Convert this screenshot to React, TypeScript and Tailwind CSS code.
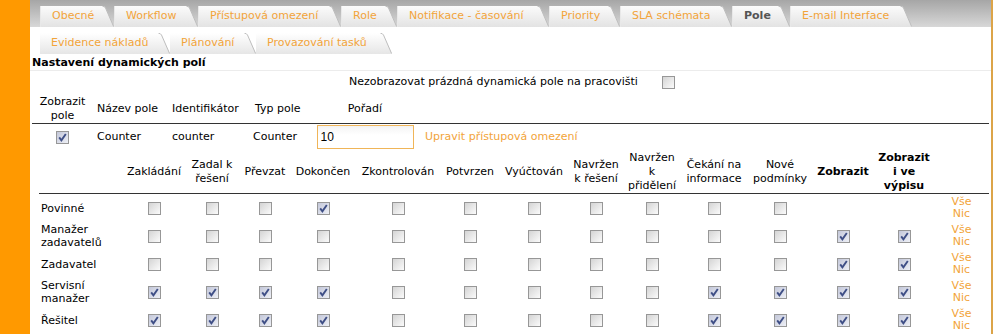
import React from "react";

const ORANGE = "text-[#f2a43a]";

function Check({ on }: { on: boolean }) {
  return (
    <span
      className={
        "inline-flex items-center justify-center w-[13px] h-[13px] border border-[#979797] " +
        (on
          ? "bg-[linear-gradient(135deg,#c3c7d9,#eef0f6)]"
          : "bg-[linear-gradient(135deg,#d4d4d4,#fbfbfb)]")
      }
    >
      {on && (
        <svg width="11" height="11" viewBox="0 0 11 11">
          <path d="M2.2 5.4 L4.4 8.3 L8.8 2" fill="none" stroke="#3f4f86" strokeWidth="1.9" />
        </svg>
      )}
    </span>
  );
}

function Tab({
  label,
  width,
  active,
  row,
  id,
}: {
  label: string;
  width: number;
  active?: boolean;
  row: 1 | 2;
  id: string;
}) {
  const top = row === 1 ? "#fbfbfb" : "#ffffff";
  const bot = row === 1 ? "#e3e3e3" : "#e6e6e6";
  return (
    <div className="flex h-[21px] shrink-0" style={{ width }}>
      <div
        className={
          "flex-1 flex items-center pl-[11px] whitespace-nowrap " +
          (row === 1
            ? "bg-[linear-gradient(#fbfbfb,#e3e3e3)] border-l border-[#e8e8e8]"
            : "bg-[linear-gradient(#ffffff,#e6e6e6)]") +
          (active ? " font-bold text-[#555555]" : " " + ORANGE)
        }
      >
        {label}
      </div>
      <svg width="13" height="21" viewBox="0 0 13 21" className="shrink-0">
        <defs>
          <linearGradient id={id} x1="0" y1="0" x2="0" y2="1">
            <stop offset="0" stopColor={top} />
            <stop offset="1" stopColor={bot} />
          </linearGradient>
        </defs>
        <path d="M0 0 H1.5 Q3.5 0 4.5 2 L13 21 H0 Z" fill={`url(#${id})`} />
        <path d="M1.5 0.3 Q3.5 0.3 4.5 2 L12.6 20.5" fill="none" stroke="#bdbdbd" strokeWidth="1" />
      </svg>
    </div>
  );
}

const tabs1: [string, number, boolean?][] = [
  ["Obecné", 74],
  ["Workflow", 84],
  ["Přístupová omezení", 143],
  ["Role", 56],
  ["Notifikace - časování", 152],
  ["Priority", 71],
  ["SLA schémata", 112],
  ["Pole", 58, true],
  ["E-mail Interface", 122],
];

const tabs2: [string, number][] = [
  ["Evidence nákladů", 130],
  ["Plánování", 86],
  ["Provazování tasků", 136],
];

const heads: { lines: string[]; bold?: boolean }[] = [
  { lines: ["Zakládání"] },
  { lines: ["Zadal k", "řešení"] },
  { lines: ["Převzat"] },
  { lines: ["Dokončen"] },
  { lines: ["Zkontrolován"] },
  { lines: ["Potvrzen"] },
  { lines: ["Vyúčtován"] },
  { lines: ["Navržen", "k řešení"] },
  { lines: ["Navržen", "k", "přidělení"] },
  { lines: ["Čekání na", "informace"] },
  { lines: ["Nové", "podmínky"] },
  { lines: ["Zobrazit"], bold: true },
  { lines: ["Zobrazit", "i ve", "výpisu"], bold: true },
];

const rows: { label: string[]; vals: (number | null)[] }[] = [
  { label: ["Povinné"], vals: [0, 0, 0, 1, 0, 0, 0, 0, 0, 0, 0, null, null] },
  { label: ["Manažer", "zadavatelů"], vals: [0, 0, 0, 0, 0, 0, 0, 0, 0, 0, 0, 1, 1] },
  { label: ["Zadavatel"], vals: [0, 0, 0, 0, 0, 0, 0, 0, 0, 0, 0, 1, 1] },
  { label: ["Servisní", "manažer"], vals: [1, 1, 1, 1, 0, 0, 0, 0, 0, 1, 1, 1, 1] },
  { label: ["Řešitel"], vals: [1, 1, 1, 1, 0, 0, 0, 0, 0, 1, 1, 1, 1] },
];

const GRID =
  "grid grid-cols-[85px_60px_56px_50px_66px_84px_60px_68px_56px_56px_68px_64px_62px_60px_55px]";

export default function App() {
  return (
    <div className="flex w-[995px] h-[334px] overflow-hidden bg-white font-['DejaVu_Sans',sans-serif] text-[11px] text-black">
      <div className="w-[30px] shrink-0 bg-[#ff9900]" />
      <div className="w-[961px] shrink-0 flex flex-col">
        {/* tab row 1 */}
        <div className="h-[27px] shrink-0 bg-[linear-gradient(#a6a6a6,#d8d8d8)] flex items-end pl-[10px]">
          {tabs1.map(([l, w, a], i) => (
            <Tab key={l} label={l} width={w} active={a} row={1} id={"t1g" + i} />
          ))}
        </div>
        {/* tab row 2 */}
        <div className="h-[21px] mt-[6px] shrink-0 flex pl-[10px]">
          {tabs2.map(([l, w], i) => (
            <Tab key={l} label={l} width={w} row={2} id={"t2g" + i} />
          ))}
        </div>
        {/* title */}
        <div className="h-[16px] mt-[1px] pl-[2px] font-bold leading-[15px] border-b border-[#ececec]">
          Nastavení dynamických polí
        </div>
        {/* option */}
        <div className="h-[22px] flex items-center pl-[319px]">
          <span>Nezobrazovat prázdná dynamická pole na pracovišti</span>
          <span className="ml-[24px] flex">
            <Check on={false} />
          </span>
        </div>
        {/* upper table */}
        <div className="ml-[2px] w-[957px]">
          <div className="grid grid-cols-[61px_75px_81px_64px_104px_1fr] h-[31px] items-center border-b border-[#333333] pb-[1px]">
            <div className="text-center leading-[14px] pt-[2px]">
              Zobrazit
              <br />
              pole
            </div>
            <div className="pl-[4px] pt-[3px]">Název pole</div>
            <div className="pl-[4px] pt-[3px]">Identifikátor</div>
            <div className="pl-[6px] pt-[3px]">Typ pole</div>
            <div className="text-center pt-[3px]">Pořadí</div>
            <div />
          </div>
          <div className="grid grid-cols-[61px_75px_81px_64px_104px_1fr] h-[25px] items-center">
            <div className="flex justify-center pt-[1px]">
              <Check on={true} />
            </div>
            <div className="pl-[4px] pt-[1px]">Counter</div>
            <div className="pl-[4px] pt-[1px]">counter</div>
            <div className="pl-[4px] pt-[1px]">Counter</div>
            <div className="flex justify-center">
              <div className="w-[97px] h-[24px] border border-[#f0b558] bg-[linear-gradient(#f3f3f3,#ffffff_40%)] flex items-center pl-[3px] pt-[1px] text-[12px] font-['Liberation_Sans',sans-serif]">
                10
              </div>
            </div>
            <div className={"pl-[8px] pt-[1px] " + ORANGE}>Upravit přístupová omezení</div>
          </div>
        </div>
        {/* matrix */}
        <div className="ml-[9px] w-[950px] mt-[2px]">
          <div className={GRID + " h-[43px] items-center border-b border-[#333333] pb-[1px]"}>
            <div />
            {heads.map((h, i) => (
              <div
                key={i}
                className={"text-center leading-[14px] whitespace-nowrap " + (h.bold ? "font-bold" : "")}
              >
                {h.lines.map((ln, j) => (
                  <div key={j}>{ln}</div>
                ))}
              </div>
            ))}
            <div />
          </div>
          {rows.map((r, i) => (
            <div key={i} className={GRID + " h-[28px] items-center"}>
              <div className="pl-[2px] leading-[13px]">
                {r.label.map((ln, j) => (
                  <div key={j}>{ln}</div>
                ))}
              </div>
              {r.vals.map((v, j) => (
                <div key={j} className="flex justify-center">
                  {v !== null && <Check on={v === 1} />}
                </div>
              ))}
              <div className={"text-center leading-[12px] " + ORANGE}>
                <div>Vše</div>
                <div>Nic</div>
              </div>
            </div>
          ))}
        </div>
      </div>
      <div className="w-[2px] shrink-0 bg-[#dca448]" />
    </div>
  );
}
